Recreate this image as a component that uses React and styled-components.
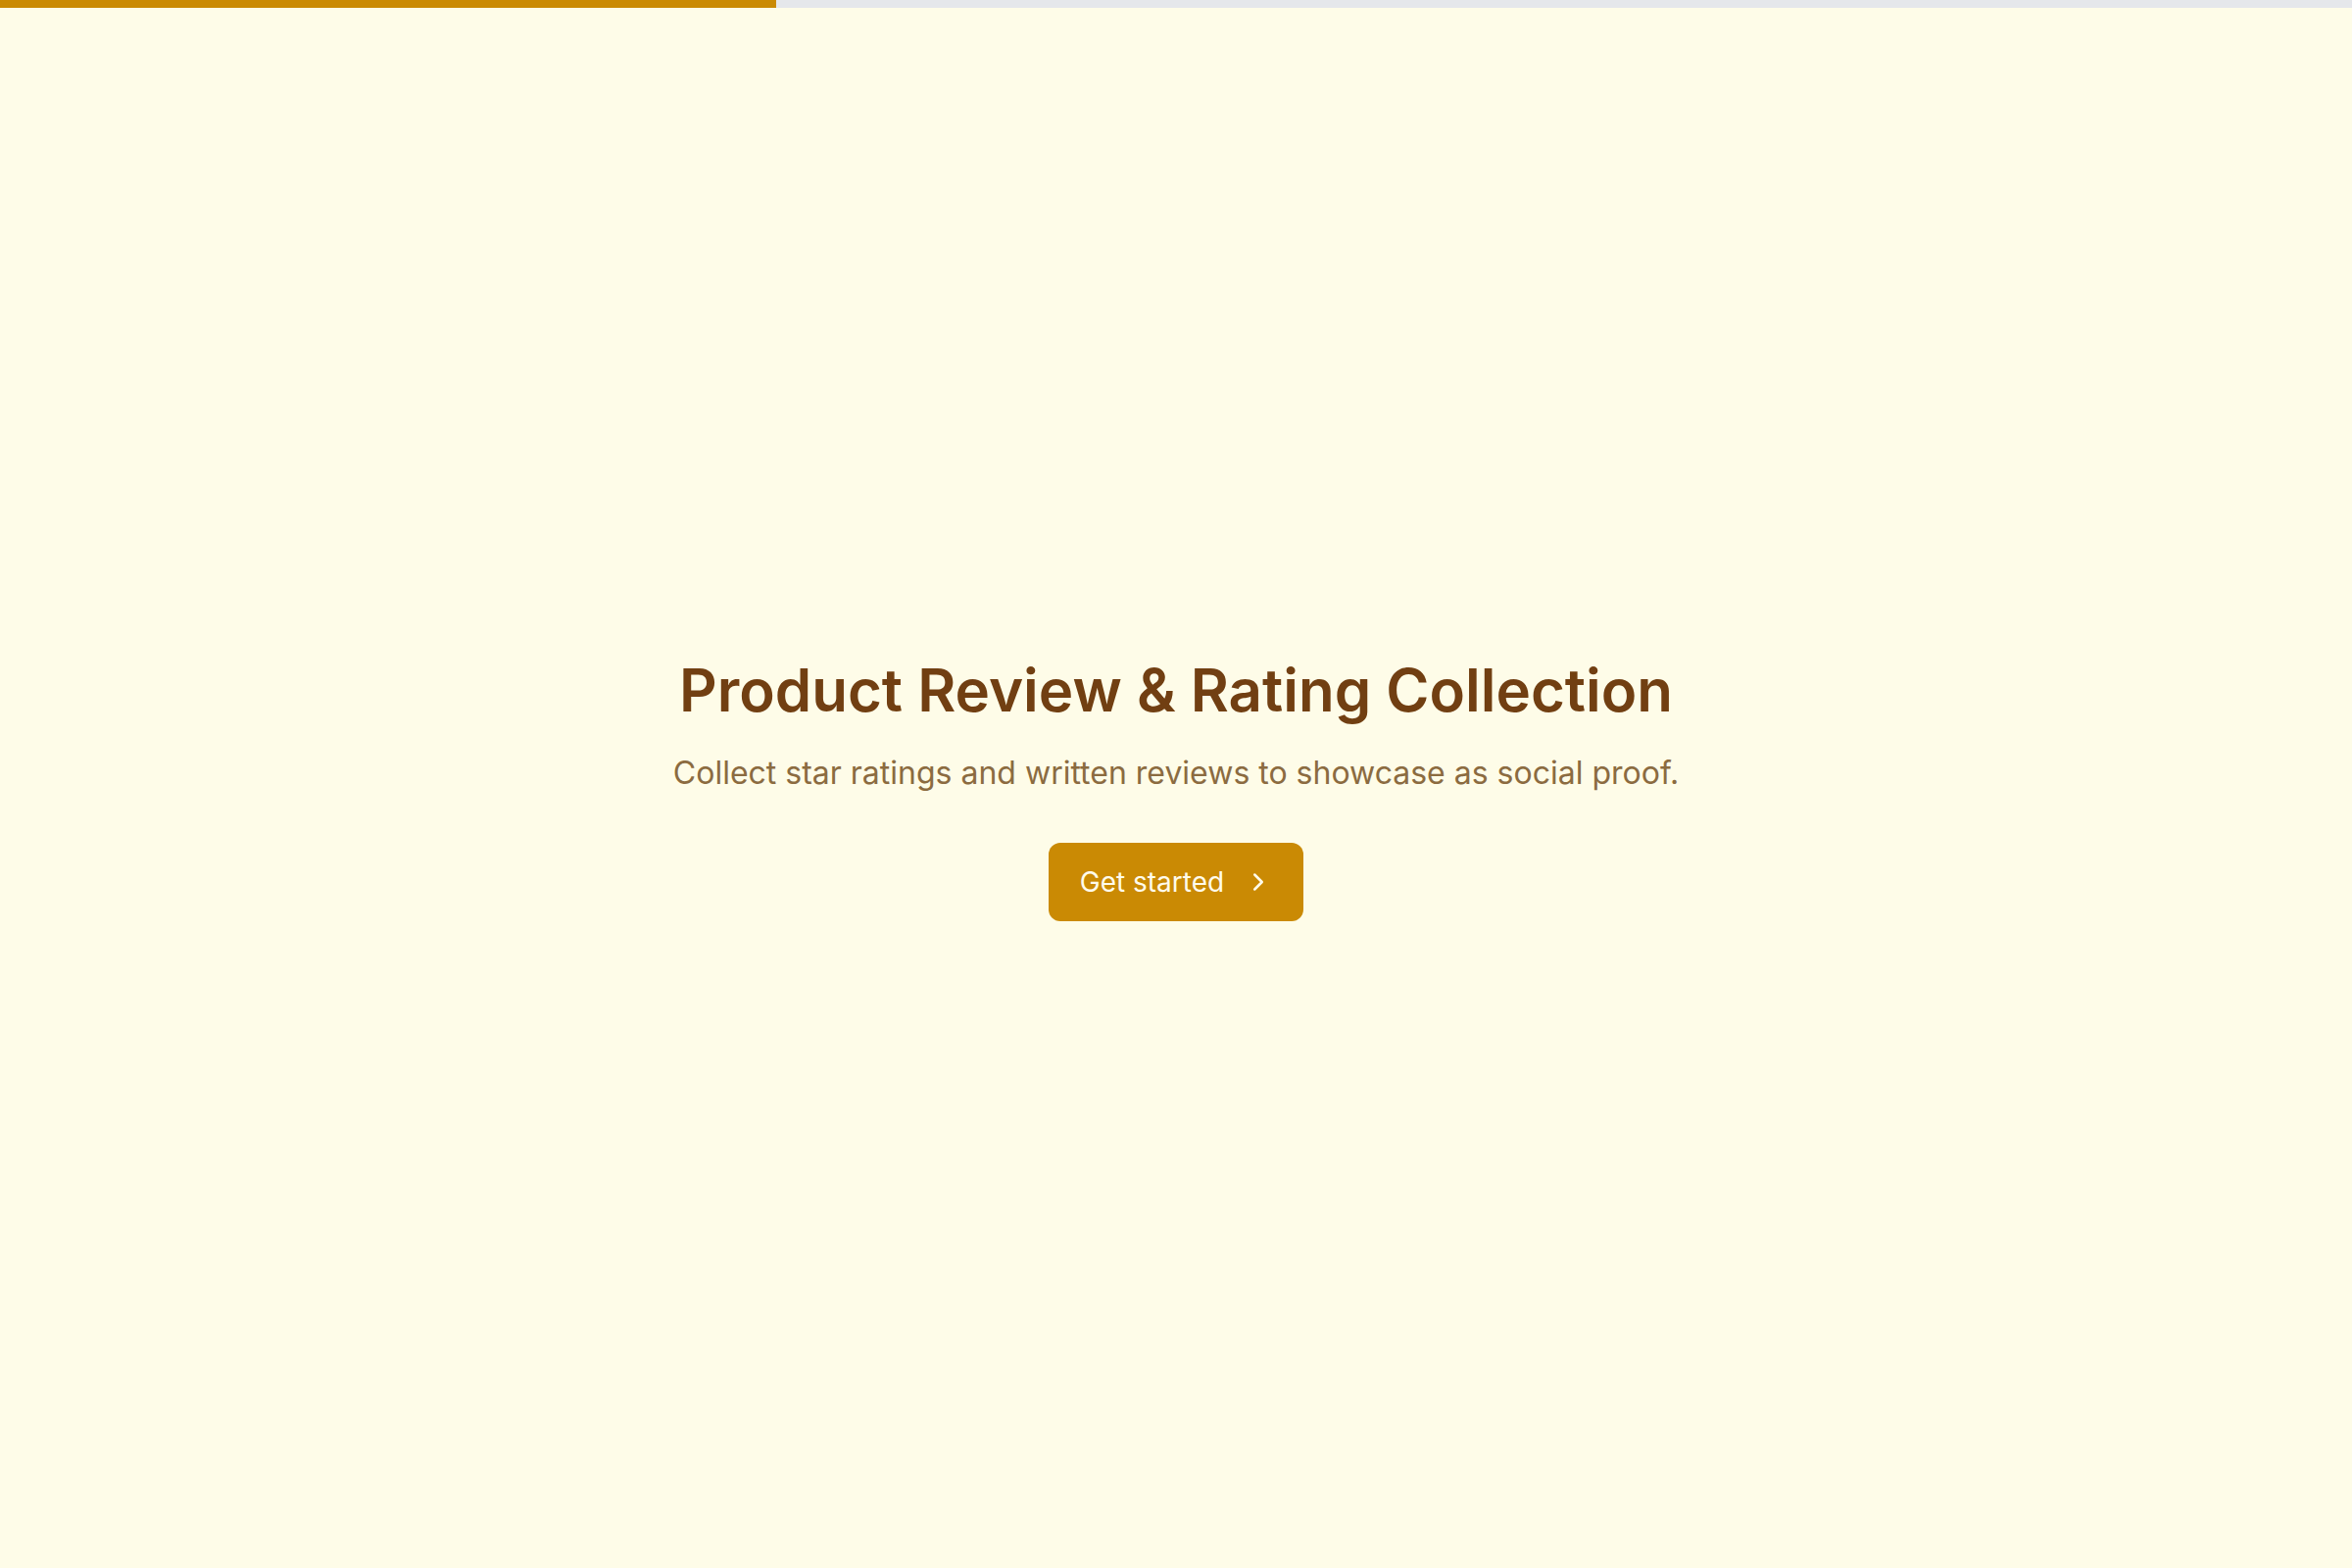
import React from "react";
import styled, { createGlobalStyle } from "styled-components";
import { ChevronRight } from "lucide-react";

const Global = createGlobalStyle`
  html, body { margin: 0; padding: 0; background: #fefce8; }
  body { font-family: Inter, "Noto Sans", sans-serif; }
  #root { min-height: 100vh; }
`;

const Page = styled.div`
  min-height: 100vh;
  display: flex;
  flex-direction: column;
  background: #fefce8;
`;

const Track = styled.div`
  height: 8px;
  background: #e5e7eb;
  flex-shrink: 0;
`;

const Fill = styled.div`
  height: 100%;
  background: #ca8a04;
`;

const Main = styled.main`
  flex: 1;
  display: flex;
  flex-direction: column;
  align-items: center;
  justify-content: center;
`;

const Title = styled.h1`
  margin: 0;
  font-size: 60px;
  line-height: 1.2;
  font-weight: 600;
  color: #713f12;
`;

const Subtitle = styled.p`
  margin: 27px 0 0;
  font-size: 32px;
  line-height: 1.4;
  color: #8b6b40;
`;

const Button = styled.button`
  margin-top: 48px;
  height: 80px;
  padding: 0 31px 0 32px;
  display: inline-flex;
  align-items: center;
  gap: 20px;
  border: none;
  border-radius: 12px;
  background: #ca8a04;
  color: #fffbeb;
  font-family: Inter, "Noto Sans", sans-serif;
  font-size: 28px;
  font-weight: 400;
  cursor: pointer;
`;

export default function App() {
  const progress = 33;
  return (
    <Page>
      <Global />
      <Track>
        <Fill style={{ width: `${progress}%` }} />
      </Track>
      <Main>
        <Title>Product Review &amp; Rating Collection</Title>
        <Subtitle>Collect star ratings and written reviews to showcase as social proof.</Subtitle>
        <Button>
          Get started
          <ChevronRight size={30} strokeWidth={2} />
        </Button>
      </Main>
    </Page>
  );
}
